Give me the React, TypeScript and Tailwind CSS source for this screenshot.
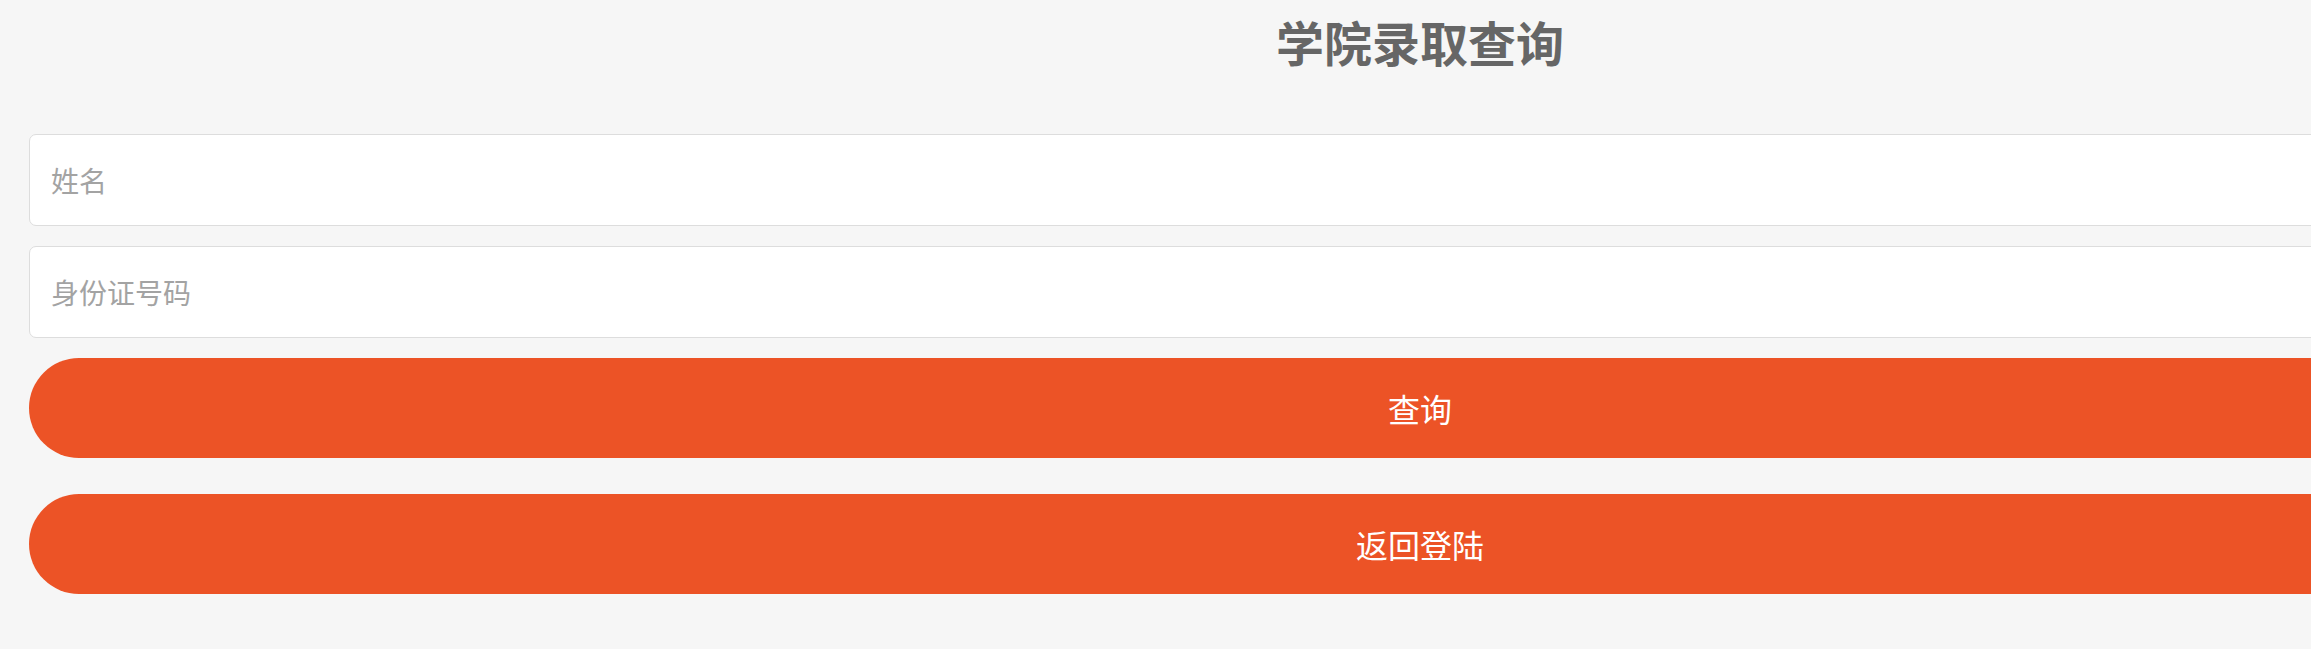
import React from "react";

export default function App() {
  const font = { fontFamily: '"Noto Sans CJK SC", "Noto Sans", sans-serif' };
  return (
    <div className="w-full h-[649px] overflow-hidden bg-[#f6f6f6]" style={font}>
      <div className="w-[2782px] ml-[29px] flex flex-col">
        <h1 className="mt-[17px] h-[48px] text-center text-[48px] leading-[48px] font-bold text-[#666666]">
          学院录取查询
        </h1>
        <input
          className="mt-[69px] h-[92px] w-full rounded-[7px] border border-[#dddddd] bg-white pl-[21px] text-[28px] text-[#333] placeholder:text-[#a3a3a3] outline-none"
          placeholder="姓名"
        />
        <input
          className="mt-[20px] h-[92px] w-full rounded-[7px] border border-[#dddddd] bg-white pl-[21px] text-[28px] text-[#333] placeholder:text-[#a3a3a3] outline-none"
          placeholder="身份证号码"
        />
        <button className="mt-[20px] h-[100px] w-full rounded-full bg-[#ec5326] text-[32px] text-white">
          查询
        </button>
        <button className="mt-[36px] h-[100px] w-full rounded-full bg-[#ec5326] text-[32px] text-white">
          返回登陆
        </button>
      </div>
    </div>
  );
}
